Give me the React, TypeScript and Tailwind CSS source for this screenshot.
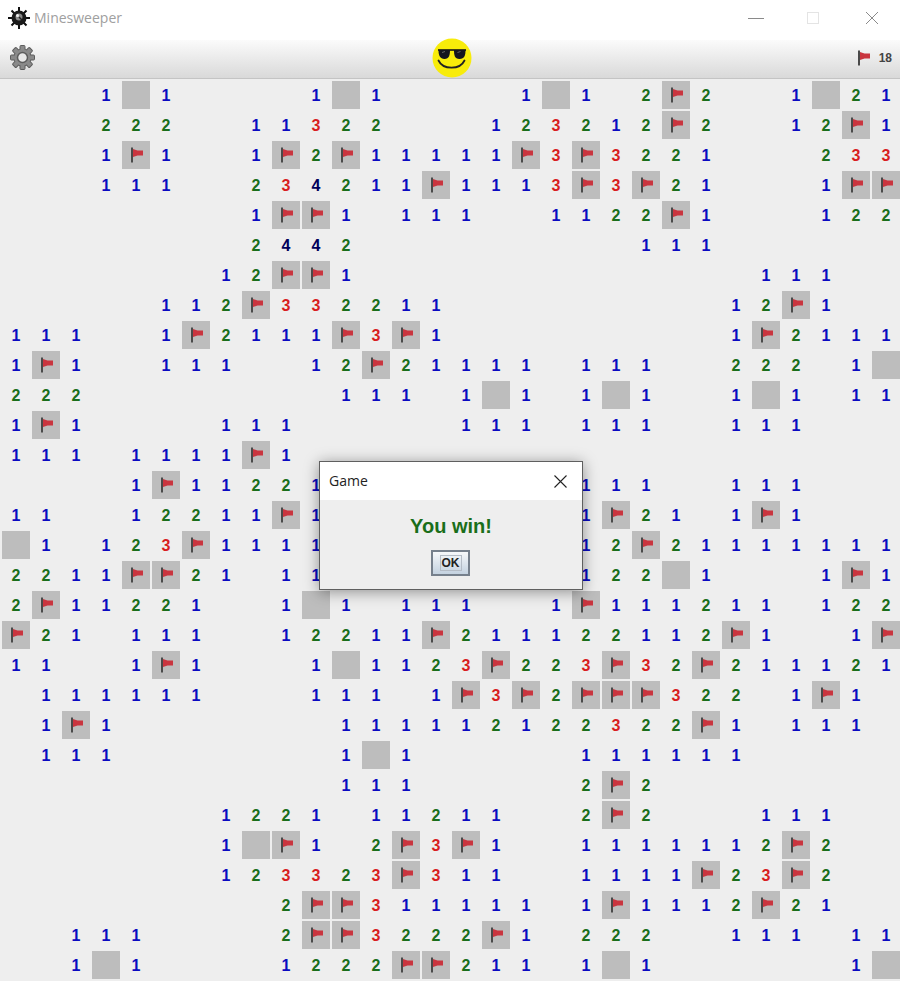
const BOARD = [
  "...1#1....1#1....1#1.2F2..1#21",
  "...222..11322...123212F2..12F1",
  "...1F1..1F2F11111F3F3221...233",
  "...111..234211F1113F3F21...1FF",
  "........1FF1.111..1122F1...122",
  "........2442.........111......",
  ".......12FF1.............111..",
  ".....112F332211.........12F1..",
  "111..1F2111F3F1.........1F2111",
  "1F1..111..12F21111.111..222.1#",
  "222........111.1#1.1#1..1#1.11",
  "1F1....111.....111.111..111...",
  "111.1111F1....................",
  "....1F11221........111..111...",
  "11..12211F1........1F21.1F1...",
  "#1.123F1111........12F21111111",
  "2211FF21.11........122#1...1F1",
  "2F11221..1#1.111..1F111211.122",
  "F21.111..12211F211122112F1..1F",
  "11..1F1...1#1123F223F32F211121",
  ".111111...111.1F3F2FFF322.1F1.",
  ".1F1.......111112122322F1.111.",
  ".111.......1#1.....111111.....",
  "...........111.....2F2........",
  ".......1221.11211..2F2...111..",
  ".......1#F1.2F3F1..1111112F2..",
  ".......123323F311..1111F23F2..",
  ".........2FF311111.1F1112F21..",
  "..111....2FF3222F1.222..111.11",
  "..1#1....1222FF211.1#1......1#",
];

const DIGIT_COLORS: Record<string, string> = {
  "1": "text-[#0a0ac0]",
  "2": "text-[#1a6e1a]",
  "3": "text-[#d81e1e]",
  "4": "text-[#00005a]",
};

function Flag() {
  return (
    <svg width="16" height="16" viewBox="0 0 16 16">
      <rect x="3" y="0.5" width="2" height="15" fill="#4a4a4a" />
      <path d="M5 2 L9.5 3.5 H15 V8.5 H9.5 L5 10 Z" fill="#c9353f" />
    </svg>
  );
}

function Cell({ value }: { value: string }) {
  if (value === ".") return <div className="h-7 w-7" />;
  if (value === "#") return <div className="h-7 w-7 bg-[#bdbdbd]" />;
  if (value === "F") {
    return (
      <div className="flex h-7 w-7 items-center justify-center bg-[#bdbdbd]">
        <Flag />
      </div>
    );
  }
  return (
    <div className={`flex h-7 w-7 items-center justify-center pt-px text-base font-bold ${DIGIT_COLORS[value]}`}>
      {value}
    </div>
  );
}

function MineIcon() {
  return (
    <svg width="22" height="22" viewBox="0 0 22 22">
      <path d="M11 0v22M0 11h22M3.5 3.5l15 15M18.5 3.5l-15 15" stroke="#111" strokeWidth="2" />
      <circle cx="11" cy="11" r="7.5" fill="#1a1a1a" />
      <circle cx="11" cy="10" r="3.5" fill="#8a8a8a" />
      <circle cx="9.5" cy="8.5" r="1.5" fill="#eeeeee" />
      <path d="M11 10l3 3" stroke="#222" strokeWidth="1.5" />
    </svg>
  );
}

function Gear() {
  const teeth = [0, 45, 90, 135, 180, 225, 270, 315];
  return (
    <svg width="25" height="25" viewBox="0 0 25 25">
      <circle cx="12.5" cy="12.5" r="8.6" fill="#8a8a8a" stroke="#5c5c5c" />
      {teeth.map((a) => (
        <rect
          key={a}
          x="10"
          y="0.5"
          width="5"
          height="6"
          rx="1"
          fill="#8a8a8a"
          stroke="#5c5c5c"
          transform={`rotate(${a} 12.5 12.5)`}
        />
      ))}
      <circle cx="12.5" cy="12.5" r="8.2" fill="#8a8a8a" />
      <circle cx="12.5" cy="12.5" r="5" fill="#e8e8e8" stroke="#5c5c5c" strokeWidth="1.5" />
    </svg>
  );
}

function Smiley() {
  return (
    <svg width="40" height="40" viewBox="0 0 40 40" className="ml-[2px] shrink-0">
      <circle cx="20" cy="20" r="19.5" fill="#f8ec0a" />
      <path d="M6 12H34" stroke="#111" strokeWidth="1.6" />
      <path d="M6.5 12h11.5c0 5-1 9-5.5 9S6.5 17.5 6.5 12Z" fill="#15151f" />
      <path d="M22 12h11.5c0 5.5-1 9-6 9S22 17 22 12Z" fill="#15151f" />
      <path d="M10 14.5l3-1" stroke="#666" />
      <path d="M25.5 14.5l3-1" stroke="#666" />
      <path d="M6.5 22.5C11 32 28 32 32.5 22.5" fill="none" stroke="#222" strokeWidth="1.8" strokeLinecap="round" />
    </svg>
  );
}

function TitleBar() {
  return (
    <div className="flex h-10 items-center justify-between bg-white pb-1 pl-[8px] pr-[22px]">
      <div className="flex items-center gap-[4px]">
        <MineIcon />
        <span className="text-sm text-[#a0a0a0] [font-family:'Open_Sans',sans-serif]">Minesweeper</span>
      </div>
      <div className="flex items-center">
        <div className="h-px w-4 bg-[#8a8a8a]" />
        <div className="ml-[43px] h-3 w-3 border border-[#e4e4e4]" />
        <svg width="12" height="12" viewBox="0 0 12 12" className="ml-[47px]">
          <path d="M0 0L12 12M12 0L0 12" stroke="#8a8a8a" />
        </svg>
      </div>
    </div>
  );
}

function Toolbar() {
  return (
    <div className="flex h-[39px] items-center border-b border-[#c4c4c4] bg-gradient-to-b from-[#fbfbfb] to-[#d9d9d9] pb-[3px] pl-[10px] pr-2">
      <div className="flex flex-1 basis-0">
        <Gear />
      </div>
      <Smiley />
      <div className="flex flex-1 basis-0 items-center justify-end gap-2">
        <Flag />
        <span className="text-xs font-bold text-[#444444]">18</span>
      </div>
    </div>
  );
}

function Dialog() {
  return (
    <div className="absolute left-[319px] top-[461px] w-[264px] border border-[#5f5f5f] bg-[#eeeeee] shadow-[0_2px_14px_rgba(0,0,0,0.4)]">
      <div className="flex h-[38px] items-center justify-between bg-white pl-[9px] pr-[15px]">
        <span className="text-sm text-[#222222] [font-family:'Open_Sans',sans-serif]">Game</span>
        <svg width="13" height="13" viewBox="0 0 13 13">
          <path d="M0.5 0.5L12.5 12.5M12.5 0.5L0.5 12.5" stroke="#222" strokeWidth="1.1" />
        </svg>
      </div>
      <div className="flex h-[89px] flex-col items-center pt-[13px]">
        <div className="text-xl font-bold leading-[26px] text-[#1a6e1a]">You win!</div>
        <button className="mt-[11px] -ml-px flex h-[26px] w-[39px] items-center justify-center border-2 border-[#76808c] bg-gradient-to-b from-[#f6f8fa] to-[#c4d2e0]">
          <span className="border border-[#b4bcc6] px-px text-xs font-bold leading-[14px] text-[#222222]">OK</span>
        </button>
      </div>
    </div>
  );
}

export default function App() {
  return (
    <div className="relative h-[981px] w-[900px] overflow-hidden bg-[#eeeeee] [font-family:'Liberation_Sans',Arial,sans-serif]">
      <TitleBar />
      <Toolbar />
      <div className="mt-px grid grid-cols-[repeat(30,30px)] auto-rows-[30px] pl-[2px]">
        {BOARD.flatMap((row, y) =>
          row.split("").map((value, x) => (
            <div key={`${x}-${y}`} className="pt-px">
              <Cell value={value} />
            </div>
          ))
        )}
      </div>
      <Dialog />
    </div>
  );
}
